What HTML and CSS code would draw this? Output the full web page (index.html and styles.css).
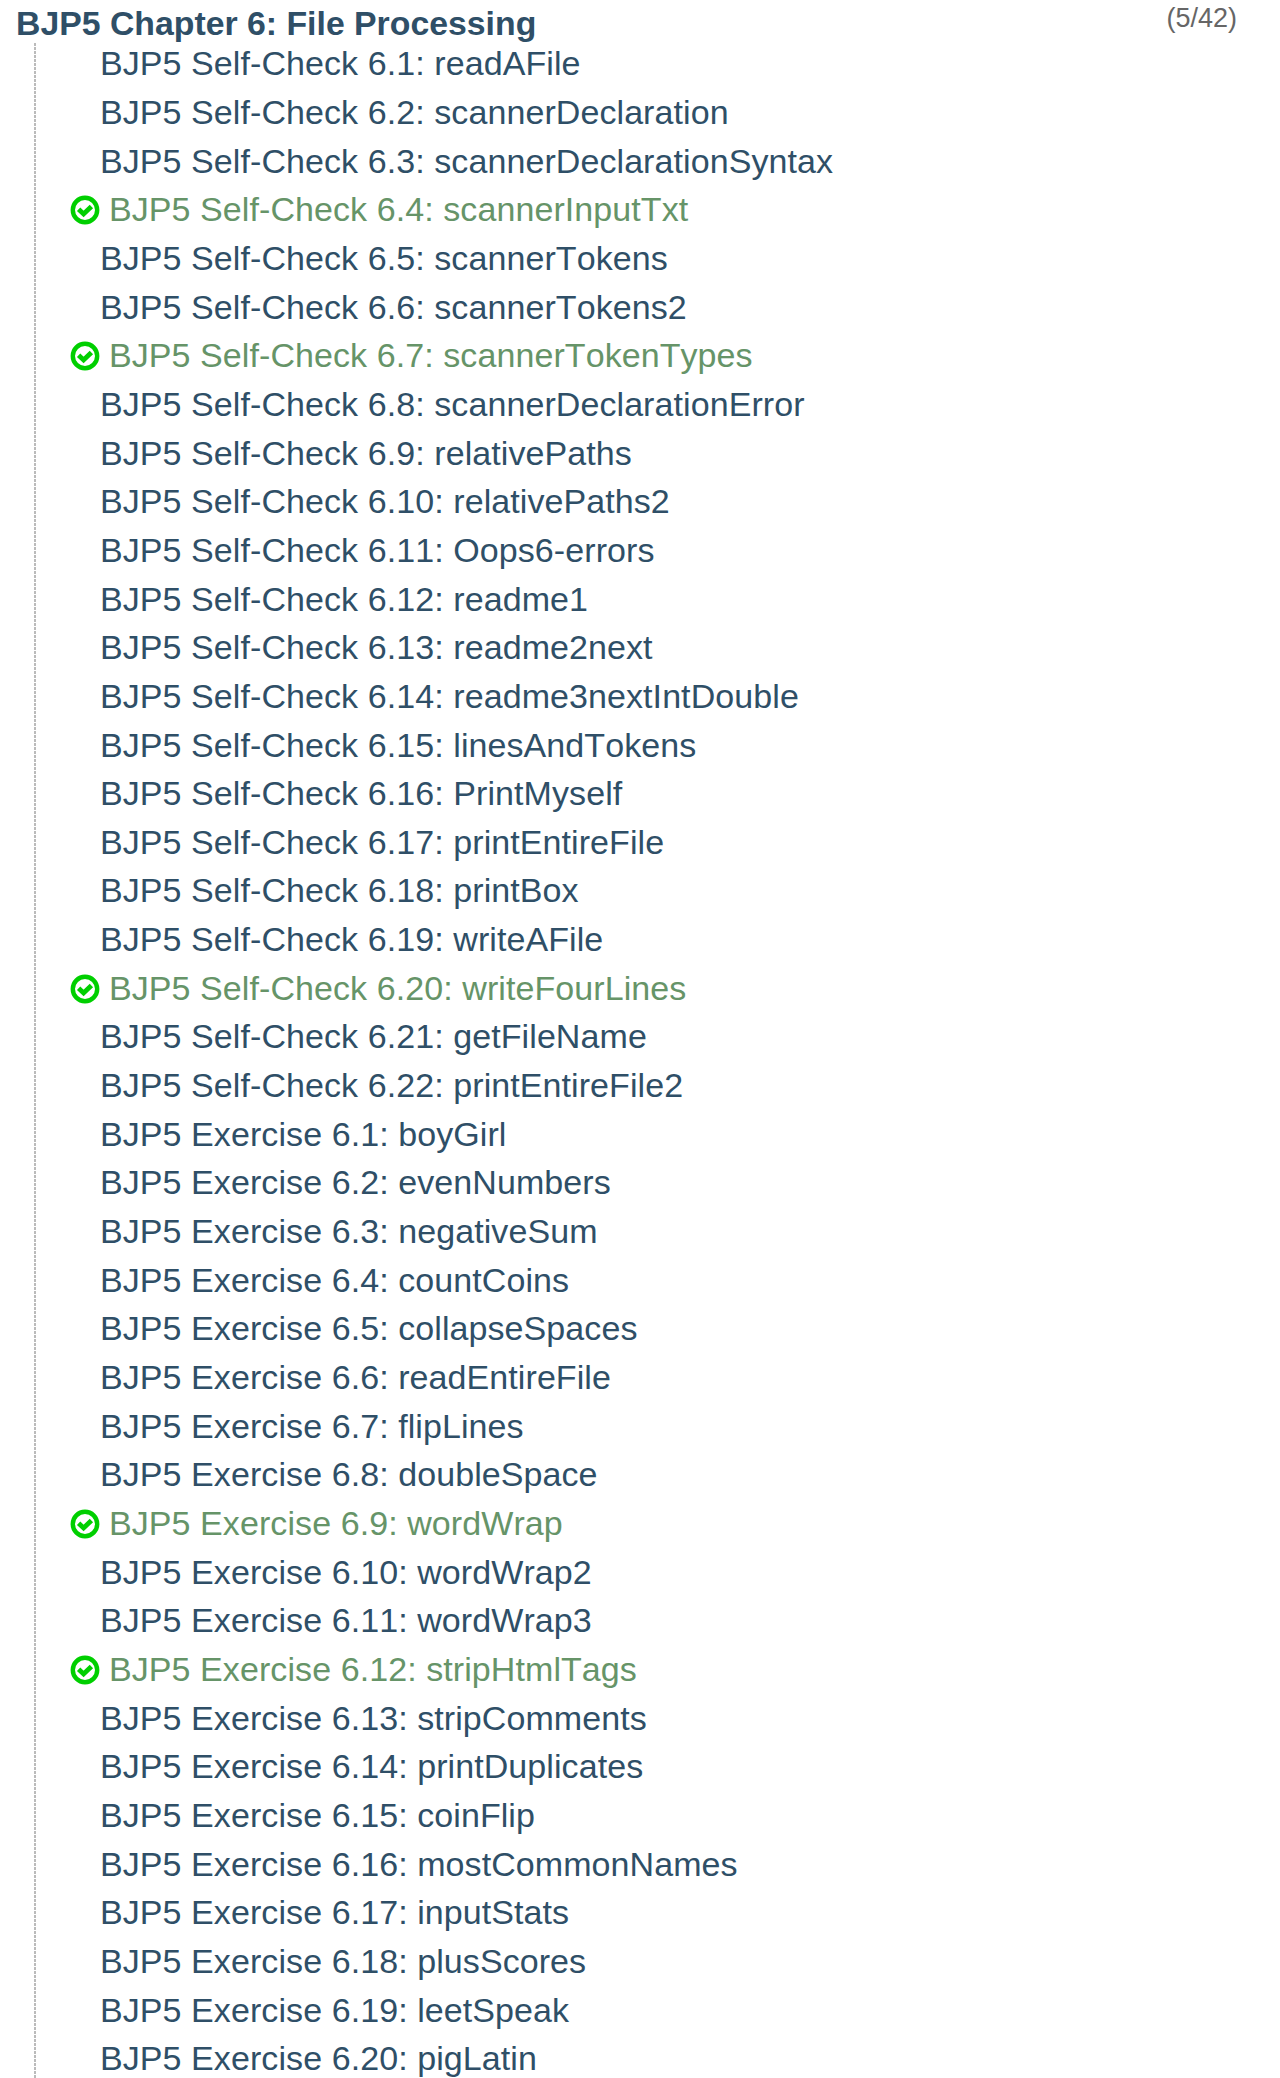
FILE: index.html
```html
<!DOCTYPE html>
<html lang="en">
<head>
<meta charset="utf-8">
<title>BJP5 Chapter 6: File Processing</title>
<link rel="stylesheet" href="styles.css">
</head>
<body>
<svg class="defs" aria-hidden="true">
  <symbol id="check" viewBox="0 0 30 30">
    <circle cx="15" cy="15" r="12.2" fill="none" stroke="#00cf00" stroke-width="4.4"/>
    <path d="M8.6 14.2 L13.6 19 L21.4 11.5" fill="none" stroke="#00cf00" stroke-width="4.8"/>
  </symbol>
</svg>
<header class="chapter">
  <h1 class="title">BJP5 Chapter 6: File Processing</h1>
  <span class="count">(5/42)</span>
</header>
<ul class="problems">
  <li class="problem">BJP5 Self-Check 6.1: readAFile</li>
  <li class="problem">BJP5 Self-Check 6.2: scannerDeclaration</li>
  <li class="problem">BJP5 Self-Check 6.3: scannerDeclarationSyntax</li>
  <li class="problem solved"><svg class="icon"><use href="#check"/></svg>BJP5 Self-Check 6.4: scannerInputTxt</li>
  <li class="problem">BJP5 Self-Check 6.5: scannerTokens</li>
  <li class="problem">BJP5 Self-Check 6.6: scannerTokens2</li>
  <li class="problem solved"><svg class="icon"><use href="#check"/></svg>BJP5 Self-Check 6.7: scannerTokenTypes</li>
  <li class="problem">BJP5 Self-Check 6.8: scannerDeclarationError</li>
  <li class="problem">BJP5 Self-Check 6.9: relativePaths</li>
  <li class="problem">BJP5 Self-Check 6.10: relativePaths2</li>
  <li class="problem">BJP5 Self-Check 6.11: Oops6-errors</li>
  <li class="problem">BJP5 Self-Check 6.12: readme1</li>
  <li class="problem">BJP5 Self-Check 6.13: readme2next</li>
  <li class="problem">BJP5 Self-Check 6.14: readme3nextIntDouble</li>
  <li class="problem">BJP5 Self-Check 6.15: linesAndTokens</li>
  <li class="problem">BJP5 Self-Check 6.16: PrintMyself</li>
  <li class="problem">BJP5 Self-Check 6.17: printEntireFile</li>
  <li class="problem">BJP5 Self-Check 6.18: printBox</li>
  <li class="problem">BJP5 Self-Check 6.19: writeAFile</li>
  <li class="problem solved"><svg class="icon"><use href="#check"/></svg>BJP5 Self-Check 6.20: writeFourLines</li>
  <li class="problem">BJP5 Self-Check 6.21: getFileName</li>
  <li class="problem">BJP5 Self-Check 6.22: printEntireFile2</li>
  <li class="problem">BJP5 Exercise 6.1: boyGirl</li>
  <li class="problem">BJP5 Exercise 6.2: evenNumbers</li>
  <li class="problem">BJP5 Exercise 6.3: negativeSum</li>
  <li class="problem">BJP5 Exercise 6.4: countCoins</li>
  <li class="problem">BJP5 Exercise 6.5: collapseSpaces</li>
  <li class="problem">BJP5 Exercise 6.6: readEntireFile</li>
  <li class="problem">BJP5 Exercise 6.7: flipLines</li>
  <li class="problem">BJP5 Exercise 6.8: doubleSpace</li>
  <li class="problem solved"><svg class="icon"><use href="#check"/></svg>BJP5 Exercise 6.9: wordWrap</li>
  <li class="problem">BJP5 Exercise 6.10: wordWrap2</li>
  <li class="problem">BJP5 Exercise 6.11: wordWrap3</li>
  <li class="problem solved"><svg class="icon"><use href="#check"/></svg>BJP5 Exercise 6.12: stripHtmlTags</li>
  <li class="problem">BJP5 Exercise 6.13: stripComments</li>
  <li class="problem">BJP5 Exercise 6.14: printDuplicates</li>
  <li class="problem">BJP5 Exercise 6.15: coinFlip</li>
  <li class="problem">BJP5 Exercise 6.16: mostCommonNames</li>
  <li class="problem">BJP5 Exercise 6.17: inputStats</li>
  <li class="problem">BJP5 Exercise 6.18: plusScores</li>
  <li class="problem">BJP5 Exercise 6.19: leetSpeak</li>
  <li class="problem">BJP5 Exercise 6.20: pigLatin</li>
</ul>
</body>
</html>
```
FILE: styles.css
```css
body {
  margin: 0;
  height: 2078px;
  overflow: hidden;
  background: #fff;
  color: #2f4f67;
  font-family: "Liberation Sans", Arial, sans-serif;
}
.defs {
  display: none;
}
.chapter {
  display: flex;
  justify-content: space-between;
  height: 39px;
  padding: 0 43px 0 16px;
}
.title {
  margin: 0;
  font-size: 33.8px;
  line-height: 47px;
  white-space: nowrap;
}
.count {
  color: #666;
  font-size: 27px;
  line-height: 37px;
}
.problems {
  margin: 0 0 0 34px;
  padding: 0 0 0 66px;
  list-style: none;
  background: repeating-linear-gradient(#bbb 0 3px, transparent 3px 4px) 0 4px / 2px 100% no-repeat;
}
.problem {
  display: flex;
  align-items: center;
  height: 48.66px;
  font-size: 34px;
  font-kerning: none;
  letter-spacing: 0.08px;
  line-height: 40px;
  white-space: nowrap;
}
.solved {
  margin-left: -30px;
  color: #669468;
}
.icon {
  width: 30px;
  height: 30px;
  margin: 2px 9px 0 0;
}
```
